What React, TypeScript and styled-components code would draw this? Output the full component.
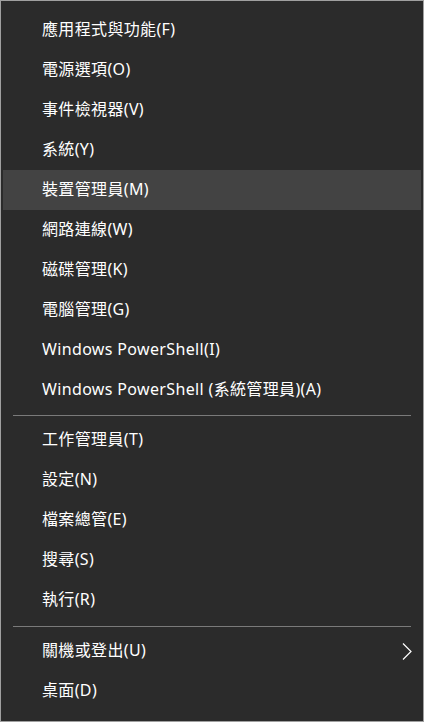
import React from 'react';
import styled, { createGlobalStyle } from 'styled-components';

const GlobalStyle = createGlobalStyle`
  html, body {
    margin: 0;
    padding: 0;
    background: #2b2b2b;
  }
  * {
    box-sizing: border-box;
  }
`;

const Menu = styled.nav`
  width: 424px;
  height: 722px;
  background: #2b2b2b;
  border: 1px solid #a0a0a0;
  padding: 9px 2px 10px;
  display: flex;
  flex-direction: column;
  font-family: 'Noto Sans', 'Noto Sans CJK TC', sans-serif;
  font-size: 16px;
  letter-spacing: 0.35px;
  color: #ffffff;
`;

const Item = styled.div<{ $active?: boolean }>`
  height: 40px;
  display: flex;
  align-items: center;
  justify-content: space-between;
  padding: 0 9px 2px 39px;
  background: ${({ $active }) => ($active ? '#434343' : 'transparent')};
  white-space: nowrap;
  line-height: 20px;
`;

const Chevron = styled.svg`
  margin-top: 2px;
`;

const Separator = styled.div<{ $extra?: number }>`
  height: ${({ $extra = 0 }) => 10 + $extra}px;
  padding-top: ${({ $extra = 0 }) => 5 + $extra}px;
  margin: 0 10px;

  &::after {
    content: '';
    display: block;
    height: 1px;
    background: #7a7a7a;
  }
`;

type Entry = { label: string; active?: boolean; submenu?: boolean };

const groups: Entry[][] = [
  [
    { label: '應用程式與功能(F)' },
    { label: '電源選項(O)' },
    { label: '事件檢視器(V)' },
    { label: '系統(Y)' },
    { label: '裝置管理員(M)', active: true },
    { label: '網路連線(W)' },
    { label: '磁碟管理(K)' },
    { label: '電腦管理(G)' },
    { label: 'Windows PowerShell(I)' },
    { label: 'Windows PowerShell (系統管理員)(A)' },
  ],
  [
    { label: '工作管理員(T)' },
    { label: '設定(N)' },
    { label: '檔案總管(E)' },
    { label: '搜尋(S)' },
    { label: '執行(R)' },
  ],
  [
    { label: '關機或登出(U)', submenu: true },
    { label: '桌面(D)' },
  ],
];

export default function App() {
  return (
    <>
      <GlobalStyle />
      <Menu>
        {groups.map((group, gi) => (
          <React.Fragment key={gi}>
            {gi > 0 && <Separator $extra={gi === 2 ? 1 : 0} />}
            {group.map((entry) => (
              <Item key={entry.label} $active={entry.active}>
                <span>{entry.label}</span>
                {entry.submenu && (
                  <Chevron width="10" height="17" viewBox="0 0 10 17" fill="none">
                    <path d="M1 0.5L9 8.5L1 16.5" stroke="#ffffff" strokeWidth="1.2" />
                  </Chevron>
                )}
              </Item>
            ))}
          </React.Fragment>
        ))}
      </Menu>
    </>
  );
}
